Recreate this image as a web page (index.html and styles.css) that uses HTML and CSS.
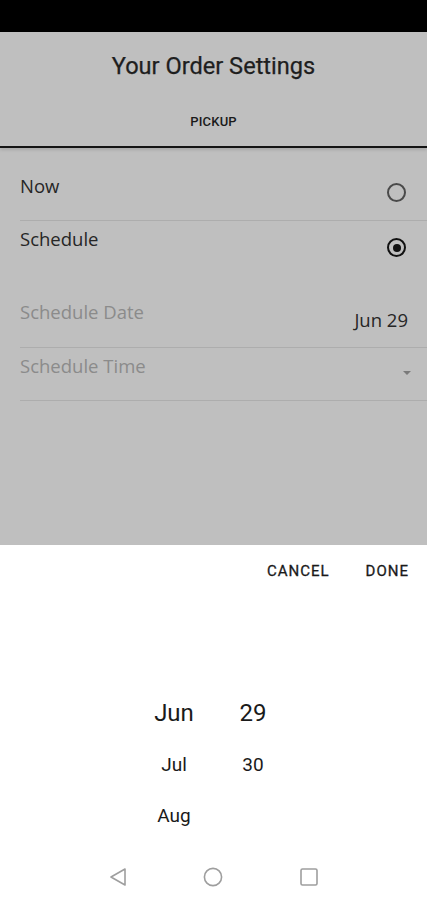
FILE: index.html
```html
<!DOCTYPE html>
<html>
<head>
<meta charset="utf-8">
<link rel="stylesheet" href="styles.css">
</head>
<body>
<div class="screen">
  <div class="status"></div>
  <div class="overlay">
    <div class="header">
      <div class="title">Your Order Settings</div>
      <div class="tab">PICKUP</div>
    </div>
    <div class="list">
      <div class="row row-now">
        <span class="label">Now</span>
        <span class="radio"></span>
      </div>
      <div class="row row-schedule">
        <span class="label">Schedule</span>
        <span class="radio checked"></span>
      </div>
      <div class="row row-date">
        <span class="label muted">Schedule Date</span>
        <span class="value">Jun 29</span>
      </div>
      <div class="row row-time">
        <span class="label muted">Schedule Time</span>
        <span class="caret"></span>
      </div>
    </div>
  </div>
  <div class="sheet">
    <div class="actions">
      <span class="btn">CANCEL</span>
      <span class="btn">DONE</span>
    </div>
    <div class="picker">
      <div class="col">
        <div class="item big">Jun</div>
        <div class="item">Jul</div>
        <div class="item">Aug</div>
      </div>
      <div class="col">
        <div class="item big">29</div>
        <div class="item">30</div>
        <div class="item"></div>
      </div>
    </div>
    <div class="navbar">
      <svg class="nav-icon" width="18" height="20" viewBox="0 0 18 20"><path d="M16 2 L2 10 L16 18 Z" fill="none" stroke="#9e9e9e" stroke-width="1.6" stroke-linejoin="round"/></svg>
      <svg class="nav-icon" width="20" height="20" viewBox="0 0 20 20"><circle cx="10" cy="10" r="8.6" fill="none" stroke="#9e9e9e" stroke-width="1.6"/></svg>
      <svg class="nav-icon" width="20" height="20" viewBox="0 0 20 20"><rect x="2" y="2" width="16" height="16" rx="1.5" fill="none" stroke="#9e9e9e" stroke-width="1.6"/></svg>
    </div>
  </div>
</div>
</body>
</html>
```
FILE: styles.css
```css
html, body {
  margin: 0;
  padding: 0;
}
body {
  width: 427px;
  height: 900px;
  overflow: hidden;
  background: #ffffff;
}
.screen {
  display: flex;
  flex-direction: column;
  width: 427px;
  height: 900px;
}
.status {
  height: 32px;
  background: #000000;
  flex: none;
}
.overlay {
  height: 513px;
  background: #bfbfbf;
  flex: none;
  display: flex;
  flex-direction: column;
}
.header {
  display: flex;
  flex-direction: column;
  align-items: center;
  padding-top: 21px;
  padding-bottom: 16px;
  border-bottom: 2px solid #141414;
  box-shadow: 0 2px 3px rgba(0,0,0,0.12);
  font-family: Roboto, "Liberation Sans", sans-serif;
}
.title {
  font-size: 23.6px;
  font-weight: 400;
  line-height: 26px;
  color: #1e1e1e;
  -webkit-text-stroke: 0.25px #1e1e1e;
}
.tab {
  margin-top: 35px;
  font-size: 13px;
  font-weight: 500;
  line-height: 16px;
  letter-spacing: 0.2px;
  color: #1a1a1a;
}
.list {
  padding-left: 20px;
  font-family: "Open Sans", "Noto Sans", sans-serif;
}
.row {
  display: flex;
  justify-content: space-between;
  align-items: flex-start;
  padding-right: 20px;
  box-sizing: border-box;
}
.label {
  font-size: 18.5px;
  line-height: 24px;
  color: #262626;
}
.label.muted {
  color: #8b8b8b;
}
.row-now {
  height: 73px;
  padding-top: 26px;
  border-bottom: 1px solid #adadad;
}
.row-schedule {
  height: 79px;
  padding-top: 6px;
}
.row-date {
  height: 48px;
  padding-right: 19px;
  border-bottom: 1px solid #adadad;
}
.row-time {
  height: 53px;
  padding-top: 6px;
  padding-right: 16px;
  border-bottom: 1px solid #adadad;
}
.radio {
  width: 15px;
  height: 15px;
  border: 2px solid #4a4a4a;
  border-radius: 50%;
  margin-top: 9px;
  margin-right: 1px;
  box-sizing: content-box;
  position: relative;
  flex: none;
}
.radio.checked {
  border-color: #111111;
  margin-top: 11px;
}
.radio.checked::after {
  content: "";
  position: absolute;
  left: 3.5px;
  top: 3.5px;
  width: 8px;
  height: 8px;
  border-radius: 50%;
  background: #111111;
}
.value {
  font-size: 18.5px;
  line-height: 24px;
  margin-top: 8px;
  color: #262626;
}
.caret {
  width: 0;
  height: 0;
  border-left: 4px solid transparent;
  border-right: 4px solid transparent;
  border-top: 4px solid #7a7a7a;
  margin-top: 17px;
}
.sheet {
  flex: 1;
  background: #ffffff;
  display: flex;
  flex-direction: column;
  font-family: Roboto, "Liberation Sans", sans-serif;
}
.actions {
  display: flex;
  justify-content: flex-end;
  gap: 36px;
  padding-top: 18px;
  padding-right: 18px;
  height: 34px;
}
.btn {
  font-size: 15px;
  font-weight: 400;
  line-height: 16px;
  letter-spacing: 1px;
  color: #1a1a1a;
  -webkit-text-stroke: 0.3px #1a1a1a;
}
.picker {
  display: flex;
  gap: 9px;
  padding-left: 139px;
  padding-top: 91px;
  height: 153px;
}
.col {
  width: 70px;
  display: flex;
  flex-direction: column;
}
.item {
  height: 51px;
  line-height: 51px;
  text-align: center;
  font-size: 19px;
  color: #1a1a1a;
}
.item.big {
  font-size: 24px;
}
.navbar {
  margin-top: auto;
  height: 46px;
  display: flex;
  justify-content: center;
  align-items: center;
  gap: 76px;
}
.nav-icon {
  display: block;
}
```
